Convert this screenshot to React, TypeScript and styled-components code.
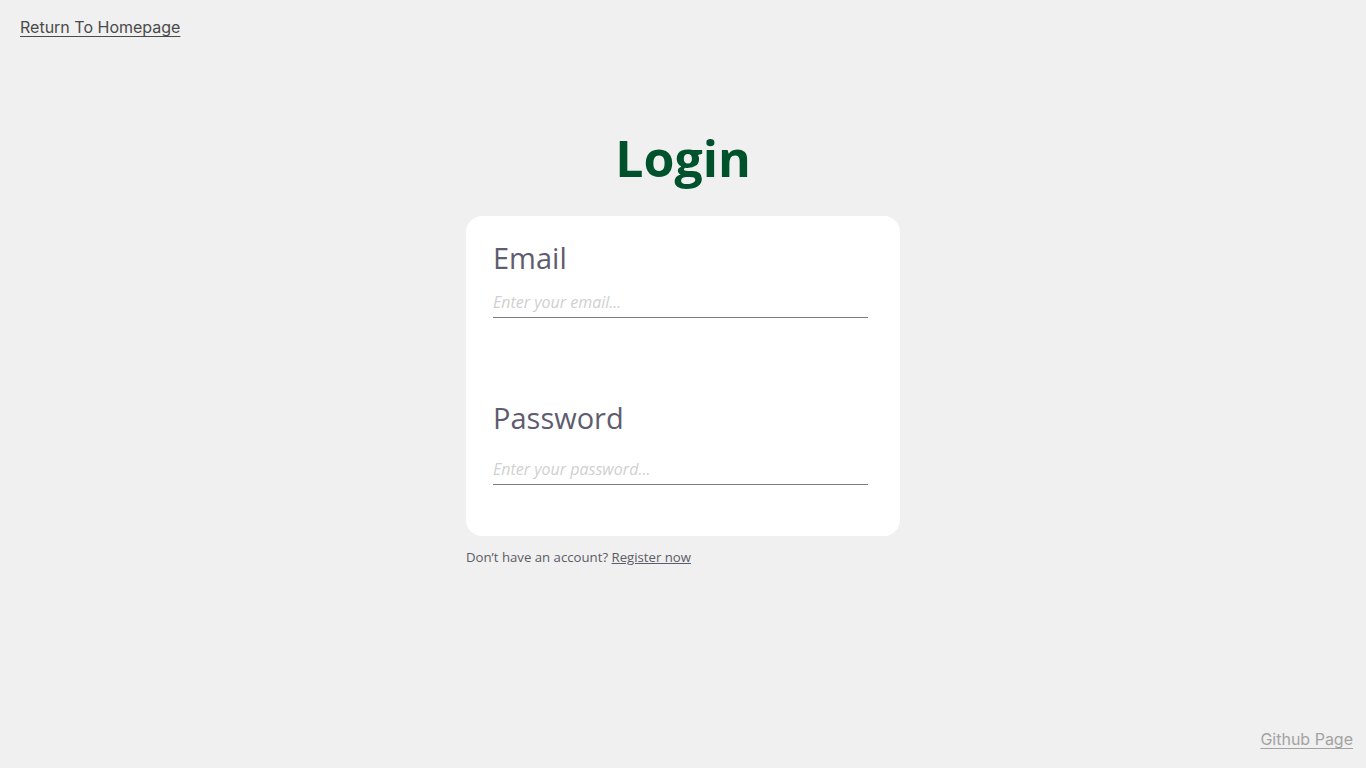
import React from 'react';
import styled, {createGlobalStyle} from 'styled-components';

const GlobalStyle = createGlobalStyle`
  html, body {
    margin: 0;
    padding: 0;
    background: #f0f0f0;
    font-family: "Open Sans", "Liberation Sans", sans-serif;
  }
`;

const StyledPage = styled.div`
  position: relative;
  min-height: 768px;
  box-sizing: border-box;
  display: flex;
  flex-direction: column;
  align-items: center;
`;

const StyledTopBar = styled.div`
  align-self: stretch;
  padding: 16px 20px 0;
  height: 44px;
  box-sizing: border-box;
`;

const StyledLink = styled.a<{$muted?: boolean}>`
  font-family: "Inter", "Liberation Sans", sans-serif;
  font-size: 16px;
  color: ${({$muted}) => ($muted ? '#a3a3a3' : '#4a4a4a')};
  text-decoration: underline;
  text-underline-offset: 3px;
  cursor: pointer;
`;

const StyledTitle = styled.h1`
  margin: 82px 0 26px;
  font-size: 50px;
  line-height: 64px;
  font-weight: 700;
  color: #00522d;
`;

const StyledCard = styled.form`
  width: 434px;
  box-sizing: border-box;
  background: #ffffff;
  border-radius: 16px;
  padding: 22px 32px 51px 27px;
  display: flex;
  flex-direction: column;
  gap: 80px;
`;

const StyledField = styled.div`
  display: flex;
  flex-direction: column;
`;

const StyledLabel = styled.label<{$spacing?: number}>`
  font-size: 29px;
  line-height: 40px;
  color: #5f5c6f;
  margin-bottom: ${({$spacing = 11}) => $spacing}px;
`;

const StyledInput = styled.input`
  border: none;
  border-bottom: 1px solid #7d7b88;
  outline: none;
  padding: 0 0 2px;
  font-family: "Open Sans", "Liberation Sans", sans-serif;
  font-size: 16px;
  line-height: 26px;
  color: #333;
  background: transparent;

  &::placeholder {
    color: #d0d0d0;
    font-style: italic;
  }
`;

const StyledFooter = styled.p`
  width: 434px;
  margin: 12px 0 0;
  font-size: 13.2px;
  line-height: 18px;
  color: #5c5c66;
`;

const StyledRegister = styled.a`
  color: #5c5c66;
  text-decoration: underline;
  cursor: pointer;
`;

const StyledCorner = styled.div`
  position: absolute;
  right: 13px;
  bottom: 18px;
`;

export default function App() {
  return (
    <>
      <GlobalStyle />
      <StyledPage>
        <StyledTopBar>
          <StyledLink>Return To Homepage</StyledLink>
        </StyledTopBar>
        <StyledTitle>Login</StyledTitle>
        <StyledCard onSubmit={(e) => e.preventDefault()}>
          <StyledField>
            <StyledLabel>Email</StyledLabel>
            <StyledInput type="email" placeholder="Enter your email..." />
          </StyledField>
          <StyledField>
            <StyledLabel $spacing={18}>Password</StyledLabel>
            <StyledInput type="password" placeholder="Enter your password..." />
          </StyledField>
        </StyledCard>
        <StyledFooter>
          Don’t have an account? <StyledRegister>Register now</StyledRegister>
        </StyledFooter>
        <StyledCorner>
          <StyledLink $muted>Github Page</StyledLink>
        </StyledCorner>
      </StyledPage>
    </>
  );
}
